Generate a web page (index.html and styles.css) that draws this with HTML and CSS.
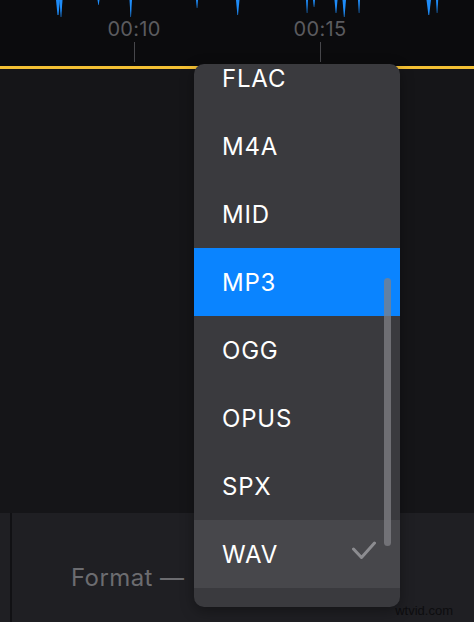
FILE: index.html
```html
<!DOCTYPE html>
<html lang="en">
<head>
<meta charset="utf-8">
<title>Format menu</title>
<link rel="stylesheet" href="styles.css">
</head>
<body>
<div class="app">
  <div class="wave">
    <svg class="spikes" width="474" height="66" viewBox="0 0 474 66">
      <g fill="#1e8cf8">
        <path d="M56 0 L60 0 L58.5 15 L57.5 15 Z"/>
        <path d="M59.5 0 L62.5 0 L61.3 17 L60.7 17 Z"/>
        <path d="M97.5 0 L99.5 0 L98.7 5 L98.3 5 Z"/>
        <path d="M129.5 0 L132 0 L131 17 L130.5 17 Z"/>
        <path d="M196 0 L198 0 L197.3 8 L196.8 8 Z"/>
        <path d="M236 0 L239.5 0 L238 15 L237.4 15 Z"/>
        <path d="M306 0 L308 0 L307.3 13 L306.8 13 Z"/>
        <path d="M313 0 L315 0 L314.3 7 L313.8 7 Z"/>
        <path d="M334.5 0 L337.5 0 L336.3 13 L335.7 13 Z"/>
        <path d="M342.5 0 L346 0 L344.5 17 L343.9 17 Z"/>
        <path d="M358 0 L360 0 L359.3 13 L358.8 13 Z"/>
        <path d="M426.5 0 L431 0 L429.2 15 L428.4 15 Z"/>
        <path d="M436 0 L438.2 0 L437.3 13 L436.8 13 Z"/>
      </g>
    </svg>
    <div class="mark mark-10"><span class="mark-label">00:10</span><span class="tick"></span></div>
    <div class="mark mark-15"><span class="mark-label">00:15</span><span class="tick"></span></div>
  </div>
  <div class="playhead"></div>
  <div class="middle"></div>
  <div class="bottom">
    <div class="bottom-side"></div>
    <div class="bottom-divider"></div>
    <div class="format">Format —</div>
    <div class="watermark">wtvid.com</div>
  </div>

  <div class="menu">
    <ul class="menu-list">
      <li class="menu-item">FLAC</li>
      <li class="menu-item">M4A</li>
      <li class="menu-item">MID</li>
      <li class="menu-item is-active">MP3</li>
      <li class="menu-item">OGG</li>
      <li class="menu-item">OPUS</li>
      <li class="menu-item">SPX</li>
      <li class="menu-item is-hover">WAV
        <svg class="check" width="24" height="20" viewBox="0 0 24 20"><polyline points="1.5,8 9.5,16.5 22.5,2" fill="none" stroke="#8c8c90" stroke-width="3" stroke-linecap="round" stroke-linejoin="round"/></svg>
      </li>
    </ul>
    <div class="scrollbar"></div>
  </div>
</div>
</body>
</html>
```

FILE: styles.css
```css
* { box-sizing: border-box; }
html, body { margin: 0; padding: 0; background: #151518; }
body { font-family: Inter, "Noto Sans", "Liberation Sans", sans-serif; }

.app {
  position: relative;
  width: 474px;
  height: 622px;
  display: flex;
  flex-direction: column;
  overflow: hidden;
}

.wave {
  position: relative;
  height: 66px;
  background: #0b0b0d;
  flex: none;
}
.spikes { display: block; position: absolute; left: 0; top: 0; }

.mark {
  position: absolute;
  top: 17px;
  width: 70px;
  display: flex;
  flex-direction: column;
  align-items: center;
}
.mark-10 { left: 99px; }
.mark-15 { left: 285px; }
.mark-label {
  font-size: 20px;
  line-height: 24px;
  letter-spacing: 0.3px;
  color: #5b5b5f;
}
.tick {
  margin-top: 1px;
  width: 1px;
  height: 20px;
  background: #47474b;
}

.playhead {
  height: 3px;
  background: #f4c034;
  flex: none;
}

.middle {
  flex: 1;
  background: #151518;
}

.bottom {
  position: relative;
  height: 109px;
  flex: none;
  display: flex;
  background: #1f1f23;
}
.bottom-side { width: 10px; }
.bottom-divider { width: 2px; background: #111114; }
.format {
  padding: 50px 0 0 59px;
  font-size: 24px;
  line-height: 29px;
  letter-spacing: 0.4px;
  color: #6c6c70;
}
.watermark {
  position: absolute;
  right: 21px;
  bottom: 4px;
  font-family: "Liberation Sans", sans-serif;
  font-size: 13px;
  color: #0d0d0f;
}

.menu {
  position: absolute;
  left: 194px;
  top: 64px;
  width: 206px;
  height: 543px;
  background: #3a3a3e;
  border-radius: 10px;
  overflow: hidden;
  box-shadow: 0 4px 14px rgba(0,0,0,0.35);
}
.menu-list {
  list-style: none;
  margin: -20px 0 0 0;
  padding: 0;
}
.menu-item {
  height: 68px;
  display: flex;
  align-items: center;
  padding: 0 24px 0 28px;
  font-size: 24px;
  letter-spacing: 0.8px;
  color: #ffffff;
}
.menu-item.is-active { background: #0a84ff; }
.menu-item.is-hover { background: #47474b; }
.check { margin-left: auto; margin-bottom: 6px; }

.scrollbar {
  position: absolute;
  left: 190px;
  top: 214px;
  width: 7px;
  height: 268px;
  border-radius: 4px;
  background: rgba(128,128,134,0.75);
}
```
